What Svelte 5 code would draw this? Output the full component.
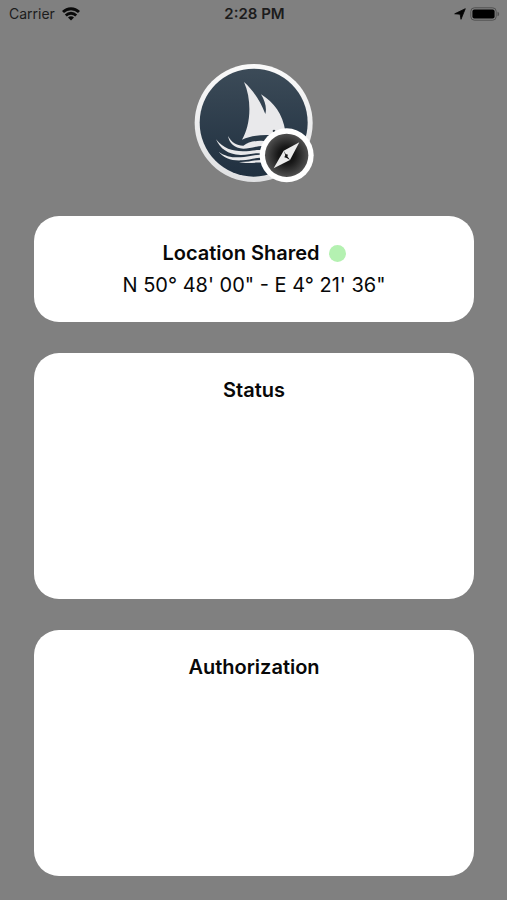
<script>
  const coordinates = `N 50° 48' 00" - E 4° 21' 36"`;
</script>

<div class="screen">
  <header class="status-bar">
    <div class="carrier">
      <span>Carrier</span>
      <svg width="18" height="14" viewBox="0 0 18 14" role="img" aria-label="Wi-Fi">
        <g fill="none" stroke="#0a0a0a" stroke-width="2.8">
          <path d="M1 5.1 C5.4 .6 12.6 .6 17 5.1" />
          <path d="M3.8 8.4 C6.8 5.5 11.2 5.5 14.2 8.4" />
        </g>
        <path d="M6 10.6 C7.8 8.9 10.2 8.9 12 10.6 L9 13.6 Z" fill="#0a0a0a" />
      </svg>
    </div>
    <time>2:28 PM</time>
    <div class="indicators">
      <svg width="12" height="12" viewBox="0 0 12 12" role="img" aria-label="Location in use">
        <path d="M11.3 .7 L7 11.3 L6.1 6.2 L.7 5.8 Z" fill="#050505" stroke="#050505" stroke-width=".8" stroke-linejoin="round" />
      </svg>
      <svg width="30" height="14" viewBox="0 0 30 14" role="img" aria-label="Battery full">
        <rect x=".8" y=".8" width="25.4" height="12.4" rx="3.6" fill="none" stroke="#505050" />
        <rect x="2.4" y="2.4" width="22.2" height="9.2" rx="2" fill="#000" />
        <path d="M27.5 4.7 C29.7 5.4 29.7 8.6 27.5 9.3 Z" fill="#505050" />
      </svg>
    </div>
  </header>

  <main>
    <svg class="logo" width="120" height="120" viewBox="30 30 360 360" role="img" aria-label="Sailing boat with compass">
      <defs>
        <linearGradient id="sea" x1="0" y1="0" x2="0" y2="1">
          <stop offset="0" stop-color="#3c4b58" />
          <stop offset="1" stop-color="#203040" />
        </linearGradient>
        <linearGradient id="rim" x1="0" y1="0" x2="0" y2="1">
          <stop offset="0" stop-color="#fafafa" />
          <stop offset="1" stop-color="#dfe0e2" />
        </linearGradient>
        <radialGradient id="dial">
          <stop offset="0" stop-color="#080808" />
          <stop offset=".4" stop-color="#181818" />
          <stop offset="1" stop-color="#505050" />
        </radialGradient>
      </defs>
      <circle cx="209" cy="207" r="177" fill="url(#rim)" />
      <circle cx="209" cy="206" r="162" fill="url(#sea)" />
      <g fill="#e9e9eb">
        <path d="M180 84 C207 108 229 141 244 180 C249 162 243 141 231 121 C270 145 296 180 304 232 L270 244 C240 242 205 243 174 257 C197 219 207 145 180 84 Z" />
        <path d="M132 246 C143 266 157 274 178 275 C195 262 222 258 252 262 L242 276 C212 276 198 284 178 284 C150 282 136 268 132 246 Z" />
        <path d="M96 256 C119 284 143 291 177 292 C200 292 219 285 246 290 L240 300 C214 293 195 304 169 303 C131 301 108 284 96 256 Z" />
        <path d="M104 293 C126 309 151 312 180 309 C204 306 219 299 248 304 L244 313 C217 308 201 318 174 319 C142 321 119 312 104 293 Z" />
        <path d="M165 324 C194 326 216 314 246 319 L250 330 C222 320 198 332 165 324 Z" />
      </g>
      <path d="M190 259 C210 248 239 246 262 249 L240 259 C222 255 207 256 190 259 Z" fill="#2b3a47" />
      <circle cx="270" cy="231" r="4" fill="#39424b" />
      <circle cx="308" cy="304" r="81" fill="#fff" />
      <circle cx="308" cy="304" r="65" fill="url(#dial)" />
      <path d="M346 265 L299 290 L269 343 L318 318 Z" fill="#ececec" />
      <path d="M299 290 L305 300 L312 302 L310 307 L318 318 L308 312 L301 310 L304 303 Z" fill="#111" />
    </svg>

    <section class="card location">
      <h2>Location Shared <span class="dot"></span></h2>
      <p>{coordinates}</p>
    </section>
    <section class="card panel"><h2>Status</h2></section>
    <section class="card panel"><h2>Authorization</h2></section>
  </main>
</div>

<style>
  :global(body) {
    margin: 0;
    background: #808080;
  }
  .screen {
    box-sizing: border-box;
    min-height: 100vh;
    display: flex;
    flex-direction: column;
    background: #808080;
    color: #080808;
    font-family: Inter, "Liberation Sans", sans-serif;
  }
  .status-bar {
    display: grid;
    grid-template-columns: 1fr auto 1fr;
    align-items: center;
    height: 28px;
    padding: 0 7px 0 9px;
    font-size: 14px;
    line-height: 28px;
    color: #1c1c1c;
  }
  .carrier,
  .indicators {
    display: flex;
    align-items: center;
    gap: 7px;
  }
  .indicators {
    justify-content: flex-end;
    gap: 4px;
  }
  time {
    font-size: 15px;
    font-weight: 600;
  }
  main {
    flex: 1;
    display: flex;
    flex-direction: column;
    gap: 31px;
    padding: 36px 33px 24px 34px;
  }
  .logo {
    align-self: center;
    flex: none;
    margin-bottom: 1px;
  }
  .card {
    box-sizing: border-box;
    padding: 21px 16px;
    border-radius: 25px;
    background: #fff;
    text-align: center;
  }
  .location {
    min-height: 106px;
  }
  .panel {
    flex: 1;
    min-height: 200px;
  }
  h2,
  p {
    margin: 0;
    font-size: 20px;
    line-height: 32px;
  }
  h2 {
    display: flex;
    align-items: center;
    justify-content: center;
    gap: 9px;
    font-weight: 600;
  }
  .dot {
    width: 17px;
    height: 17px;
    border-radius: 50%;
    background: #b4f1b1;
  }
</style>
